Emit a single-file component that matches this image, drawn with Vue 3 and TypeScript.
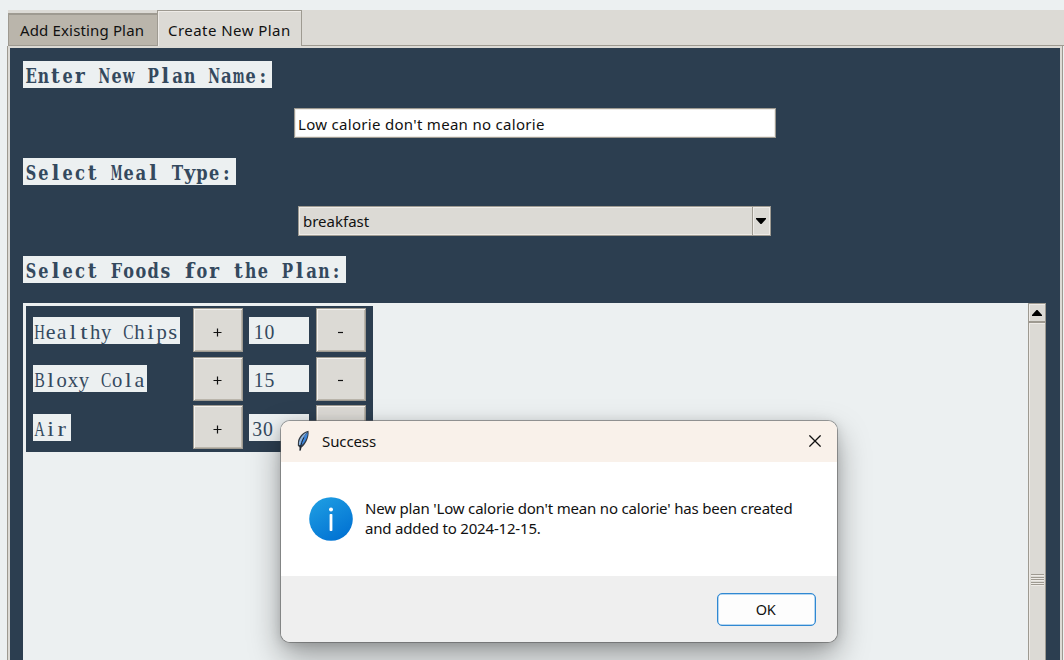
<script setup lang="ts">
import { ref } from 'vue'

interface Food { name: string; width: number; count: number; countX: number }
interface Cell { ch: string; x: number; width?: number }

const foods = ref<Food[]>([
  { name: 'Healthy Chips', width: 147, count: 10, countX: 4.5 },
  { name: 'Bloxy Cola', width: 114, count: 15, countX: 4.5 },
  { name: 'Air', width: 38, count: 30, countX: 3 },
])

const planName = ref("Low calorie don't mean no calorie")
const mealType = ref('breakfast')

// Share of the cell each glyph fills; unlisted glyphs use the default share.
const boldShares: Record<string, number> = {
  l: 0.62, i: 0.62, t: 0.72, r: 0.8, f: 0.76, s: 0.8, c: 0.82, e: 0.84, a: 0.88, o: 0.88, S: 0.86,
  m: 0.96, M: 0.96, w: 0.96, N: 0.96,
}
const plainShares: Record<string, number> = {
  l: 0.6, i: 0.6, t: 0.66, r: 0.76, s: 0.8, e: 0.88, a: 0.88, H: 0.96, A: 0.96,
}

// Places each character in the middle of a fixed-width cell.
function cells(text: string, pitch: number, shares: Record<string, number>): Cell[] {
  return Array.from(text).map((ch, i) => ({
    ch, x: (i + 0.5) * pitch, width: ch === ':' ? undefined : pitch * (shares[ch] ?? 0.93),
  })).filter(c => c.ch !== ' ')
}

const sections = [
  { text: 'Enter New Plan Name:', width: 249.4 },
  { text: 'Select Meal Type:', width: 213 },
  { text: 'Select Foods for the Plan:', width: 322.5 },
]
</script>

<template>
  <div class="window">
    <div class="tabs">
      <div class="tab"><span>Add Existing Plan</span></div>
      <div class="tab active"><span>Create New Plan</span></div>
      <div class="tab-rest"></div>
    </div>
    <div class="panel">
      <template v-for="(s, i) in sections" :key="s.text">
        <div class="heading" :style="{ width: s.width + 'px' }">
          <svg :width="s.width" height="27" :aria-label="s.text">
            <text y="22" class="mono-bold"><tspan v-for="c in cells(s.text, 12.2, boldShares)" :key="c.x" :x="c.x + 2" :textLength="c.width" lengthAdjust="spacingAndGlyphs">{{ c.ch }}</tspan></text>
          </svg>
        </div>
        <div v-if="i === 0" class="entry"><span>{{ planName }}</span></div>
        <div v-if="i === 1" class="combo">
          <span>{{ mealType }}</span>
          <div class="drop"><svg width="10" height="6"><path d="M0 0H10V1L5.500 6H4.500L0 1Z" /></svg></div>
        </div>
      </template>

      <div class="list">
        <div class="canvas">
          <div class="foods">
            <div v-for="f in foods" :key="f.name" class="food">
              <div class="name">
                <div class="chip" :style="{ width: f.width + 'px' }">
                  <svg :width="f.width" height="27"><text y="22" class="mono"><tspan v-for="c in cells(f.name, 11.1, plainShares)" :key="c.x" :x="c.x + 1" :textLength="c.width" lengthAdjust="spacingAndGlyphs">{{ c.ch }}</tspan></text></svg>
                </div>
              </div>
              <div class="btn"><svg width="9" height="9"><path d="M.5 4.500H8.500M4.500 .5V8.500" /></svg></div>
              <div class="count">
                <svg width="60" height="27"><text y="22" class="mono"><tspan v-for="c in cells(String(f.count), 10.6, plainShares)" :key="c.x" :x="c.x + f.countX" :textLength="c.width" lengthAdjust="spacingAndGlyphs">{{ c.ch }}</tspan></text></svg>
              </div>
              <div class="btn"><svg width="5" height="9"><path d="M0 4.500H5" /></svg></div>
            </div>
          </div>
        </div>
        <div class="scroll">
          <div class="arrow"><svg width="10" height="6"><path d="M0 6H10V5L5.500 0H4.500L0 5Z" /></svg></div>
          <div class="thumb"><div class="grip"><i v-for="n in 5" :key="n"></i></div></div>
        </div>
      </div>
    </div>

    <div class="dialog">
      <div class="titlebar">
        <svg class="feather" width="14" height="22" viewBox="0 0 14 22">
          <path d="M12.500 .7C8 1.500 3 6 2 11L1.800 15.500L3.500 17.500L3.500 21L4.800 20.500L5.500 17.500C9 15 13.500 8 12.500 .7Z" fill="#333b44" />
          <path d="M11.300 2C8 3.500 4 7 3 12.500L3 15L4.500 15C6 9 8 6 11.300 2Z" fill="#8fb4dc" />
          <path d="M11.700 2.200C12 7 9 12.500 5.300 15.500L4.200 14.500C5.500 10 8.500 5 11.700 2.200Z" fill="#3d86dc" />
          <path d="M8 7.500C6 11 5 14 4.200 20" fill="none" stroke="#1d2735" stroke-width="1" />
        </svg>
        <span class="title">Success</span>
        <svg class="close" width="12" height="12" viewBox="0 0 12 12"><path d="M.4 .4L11.600 11.600M11.600 .4L.4 11.600" /></svg>
      </div>
      <div class="message">
        <svg class="info" width="44" height="44" viewBox="0 0 44 44">
          <defs><linearGradient id="blue" x1="0.2" y1="0" x2="0.8" y2="1"><stop offset="0" stop-color="#1e9de2" /><stop offset="1" stop-color="#0070d2" /></linearGradient></defs>
          <circle cx="22" cy="22" r="21.800" fill="url(#blue)" />
          <circle cx="22" cy="12.500" r="2" fill="#fff" />
          <rect x="20.600" y="17" width="2.800" height="17" rx=".8" fill="#fff" />
        </svg>
        <div class="lines"><div>New plan 'Low calorie don't mean no calorie' has been created</div><div>and added to 2024-12-15.</div></div>
      </div>
      <div class="footer"><div class="ok">OK</div></div>
    </div>
  </div>
</template>

<style>
body { margin: 0; overflow: hidden; }
</style>

<style scoped>
* { box-sizing: border-box; }
svg { display: block; flex: none; }
.window {
  position: relative; width: 1064px; height: 660px; overflow: hidden;
  background: #ecf0f1; padding: 10px 0 0 8px; display: flex; flex-direction: column;
  font-family: "Noto Sans", "Open Sans", sans-serif; font-size: 15px; color: #111;
}
.tabs { display: flex; align-items: flex-end; height: 36px; flex: none; background: #dcdad5; }
.tab {
  width: 149px; height: 33px; background: #bab5ab; border: 1px solid #9e9a91; border-width: 2px 0 1px 1px;
  padding-left: 11px; display: flex; align-items: center; white-space: nowrap; letter-spacing: .15px;
}
.tab.active {
  width: 145px; height: 36px; background: #dcdad5; border: 1px solid #9e9a91; border-bottom: 0;
  box-shadow: inset 1px 1px #eeebe7; padding: 3px 0 0 10px; letter-spacing: .45px;
}
.tab-rest { flex: 1; align-self: stretch; border-bottom: 1px solid #9e9a91; }
.panel {
  width: 1054px; height: 614px; flex: none; background: #2c3e50; padding: 13px 14px 0 13px;
  border: 2px solid #dcdad5; border-bottom: 0; box-shadow: -1px 0 #9e9a91, 1px 0 #9e9a91;
  display: flex; flex-direction: column;
}
.heading { height: 27px; background: #ecf0f1; flex: none; }
.mono-bold { font: bold 20px "DejaVu Serif Condensed", "DejaVu Serif", serif; fill: #34495e; text-anchor: middle; }
.mono { font: 22px "Liberation Serif", serif; fill: #34495e; text-anchor: middle; }
.entry {
  width: 482px; height: 30px; margin: 20px 0 20px 271px; flex: none; background: #fff; border: 1px solid #9e9a91;
  box-shadow: inset 0 0 0 1px #eeebe7; padding: 2px 0 0 3px; display: flex; align-items: center; white-space: nowrap;
  letter-spacing: .3px;
}
.combo {
  width: 473px; height: 30px; margin: 21px 0 20px 275px; flex: none; background: #dcdad5; border: 1px solid #9e9a91;
  box-shadow: inset 0 0 0 1px #eeebe7; padding-left: 4px; display: flex; align-items: center; justify-content: space-between;
}
.drop { width: 18px; height: 28px; border-left: 1px solid #9e9a91; box-shadow: inset 1px 1px #eeebe7; display: flex; align-items: center; padding-left: 3px; }
.list { flex: 1; margin-top: 20px; display: flex; }
.canvas { width: 1005px; background: #ecf0f1; padding: 3px; }
.foods { width: 347px; height: 146px; background: #2c3e50; padding: 2px 7px 0; display: flex; flex-direction: column; gap: 4.700px; }
.food { display: flex; align-items: center; height: 44px; }
.name { width: 160px; }
.chip, .count { height: 27px; background: #ecf0f1; }
.btn {
  width: 50px; height: 44px; background: #dcdad5; border: 1px solid #9e9a91;
  box-shadow: inset 1px 1px #f4f2ef, inset -1px -1px #bab5ab; display: flex; align-items: center; justify-content: center;
}
.btn svg { margin: 4px 2px 0 0; }
.btn path { stroke: #111; stroke-width: 1.200; }
.count { width: 60px; margin: 0 7px 0 6px; }
.scroll { width: 18px; background: #bab5ab; border: 1px solid #9e9a91; border-bottom: 0; display: flex; flex-direction: column; }
.arrow { height: 18px; background: #dcdad5; border-bottom: 1px solid #9e9a91; box-shadow: inset 1px 1px #eeebe7; display: flex; align-items: center; padding-left: 3px; flex: none; }
.thumb { flex: 1; background: #dcdad5; border-top: 1px solid #9e9a91; box-shadow: inset 1px 1px #eeebe7; padding: 251px 1px 0 2px; }
.grip { display: flex; flex-direction: column; gap: .6px; }
.grip i { display: block; height: 2px; border-top: 1px solid #9e9a91; border-bottom: 1px solid #eeebe7; }
.dialog {
  position: absolute; left: 281px; top: 421px; width: 556px; height: 221px; border-radius: 9px; overflow: hidden;
  box-shadow: 0 0 0 1px rgba(90, 90, 90, .55), 0 14px 32px rgba(0, 0, 0, .36), 0 2px 12px rgba(0, 0, 0, .14);
  display: flex; flex-direction: column; background: #fff;
}
.titlebar { height: 41px; background: #f9f1ea; display: flex; align-items: center; padding: 0 16px 2px 15px; flex: none; }
.title { margin-left: 12px; flex: 1; font-size: 15px; letter-spacing: -.1px; }
.close path { stroke: #111; stroke-width: 1.300; }
.message { height: 114px; padding: 35px 0 0 28px; display: flex; }
.lines { margin-left: 12px; padding-top: 1px; line-height: 20px; white-space: nowrap; letter-spacing: -.18px; }
.lines div { width: max-content; }
.footer { flex: 1; background: #efefef; display: flex; justify-content: flex-end; padding: 17px 21px 0 0; }
.ok { width: 99px; height: 33px; border: 1px solid #3088d2; box-shadow: inset 0 0 0 .5px #6fb0e4; border-radius: 5px; background: #fdfdfd; display: flex; align-items: center; justify-content: center; padding: 0 2px 1px 0; font-size: 14.500px; letter-spacing: -.3px; }
</style>
